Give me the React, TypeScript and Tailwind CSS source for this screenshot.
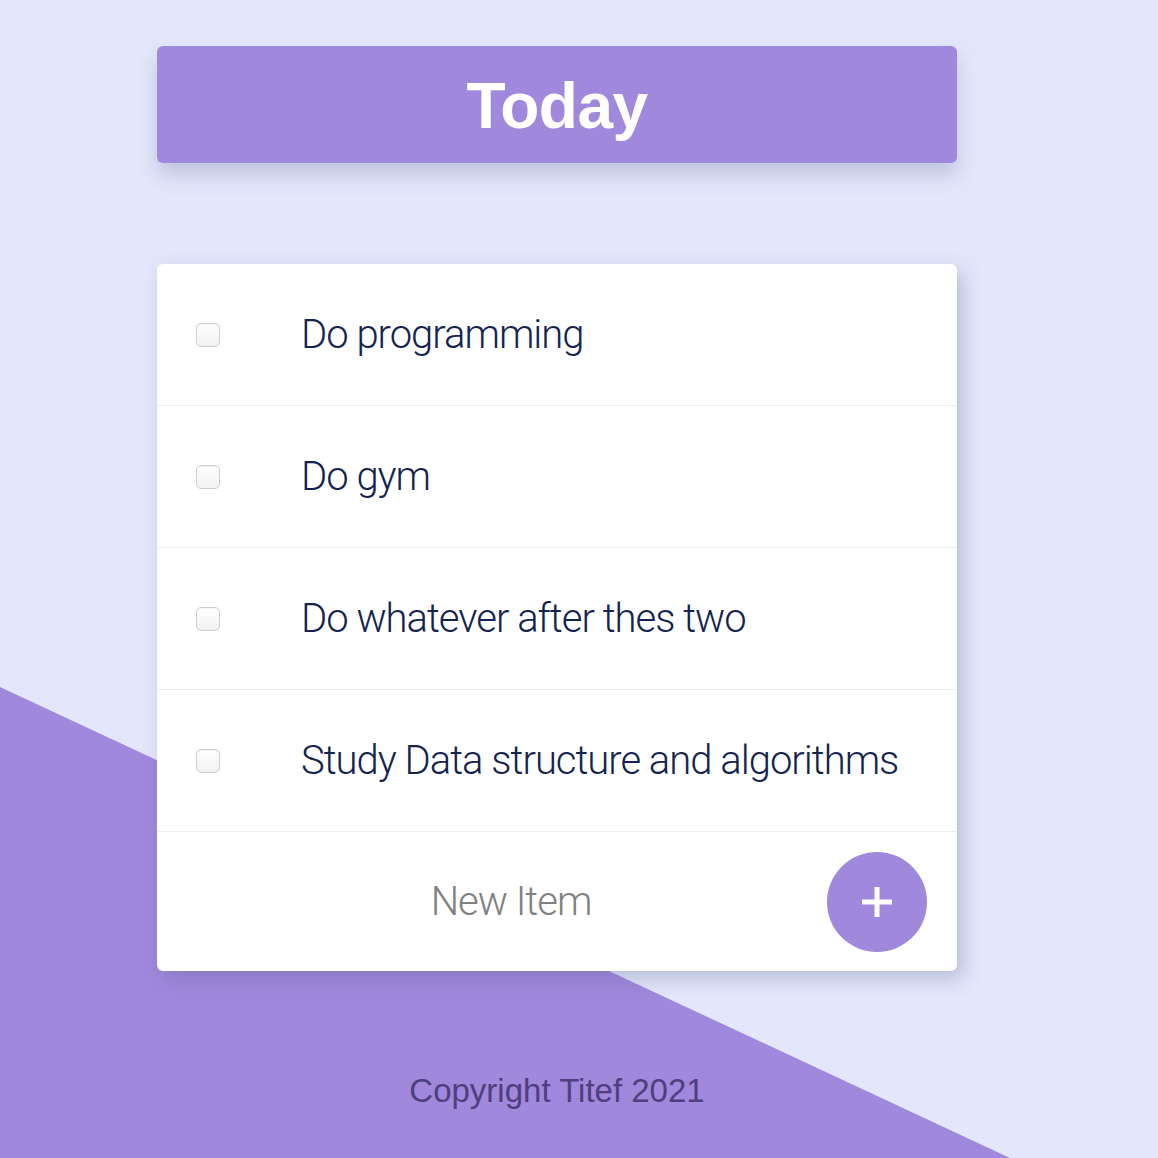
const items = [
  "Do programming",
  "Do gym",
  "Do whatever after thes two",
  "Study Data structure and algorithms",
];

function Checkbox() {
  return (
    <span className="block w-[24px] h-[24px] rounded-[5px] border border-[#cfcfcf] bg-gradient-to-b from-white to-[#f1f1f1] shadow-[inset_0_1px_1px_rgba(0,0,0,0.05)]" />
  );
}

export default function App() {
  return (
    <div className="relative min-h-[1158px] overflow-hidden bg-[#e4e7fb] font-['Roboto',sans-serif]">
      <div className="absolute inset-0 bg-[#a088dc] [clip-path:polygon(0_687px,1010px_1158px,0_1158px)]" />

      <div className="relative pl-[157px] pt-[46px] w-[957px]">
        <div className="h-[117px] rounded-[6px] bg-[#a088dc] flex items-center justify-center shadow-[0_12px_20px_rgba(80,90,140,0.25)]">
          <h1 className="text-white font-bold text-[64px] tracking-[-0.5px] font-['Liberation_Sans',sans-serif] leading-none pt-[2px]">
            Today
          </h1>
        </div>

        <div className="mt-[101px] rounded-[6px] bg-white shadow-[6px_8px_20px_rgba(80,90,140,0.3)]">
          {items.map((item) => (
            <div
              key={item}
              className="h-[142px] border-b border-[#eeeeee] flex items-center"
            >
              <div className="w-[144px] pl-[39px]">
                <Checkbox />
              </div>
              <p className="text-[40px] font-light tracking-[-1px] text-[#142450] leading-none">
                {item}
              </p>
            </div>
          ))}
          <div className="h-[139px] flex items-center pr-[30px]">
            <input
              className="flex-1 pl-[38px] text-center text-[40px] font-light tracking-[-1px] text-[#808080] placeholder:text-[#808080] outline-none bg-transparent"
              placeholder="New Item"
            />
            <button className="w-[100px] h-[100px] rounded-full bg-[#a088dc] flex items-center justify-center">
              <svg width="32" height="32" viewBox="0 0 32 32">
                <path d="M16 1v30M1 16h30" stroke="white" strokeWidth="5" />
              </svg>
            </button>
          </div>
        </div>

        <footer className="pt-[95px] text-center">
          <p className="text-[33px] text-[#4f3f7e] font-['Liberation_Sans',sans-serif]">
            Copyright Titef 2021
          </p>
        </footer>
      </div>
    </div>
  );
}
